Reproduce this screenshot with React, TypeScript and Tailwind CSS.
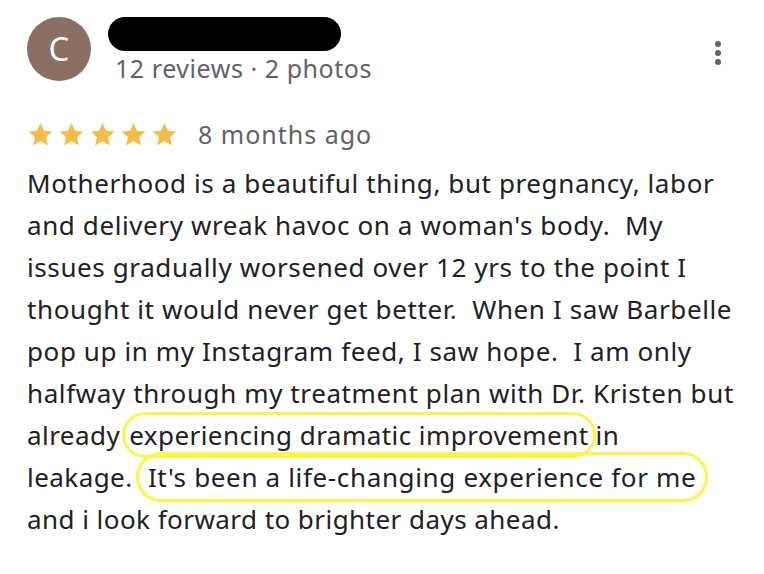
import React from "react";

const Star = () => (
  <svg viewBox="0 0 24 24" className="h-[27px] w-[27px]" fill="#f6bd46">
    <path d="M12 1.8l3.1 6.9 7.4.7-5.6 5 1.7 7.4L12 18l-6.6 3.8 1.7-7.4-5.6-5 7.4-.7z" />
  </svg>
);

const lines = [
  "Motherhood is a beautiful thing, but pregnancy, labor",
  "and delivery wreak havoc on a woman's body.  My",
  "issues gradually worsened over 12 yrs to the point I",
  "thought it would never get better.  When I saw Barbelle",
  "pop up in my Instagram feed, I saw hope.  I am only",
  "halfway through my treatment plan with Dr. Kristen but",
];

export default function App() {
  return (
    <div
      className="h-[574px] w-[764px] overflow-hidden bg-white pl-[27px] pt-[17px] text-[#202124]"
      style={{ fontFamily: "'Noto Sans', 'Open Sans', sans-serif" }}
    >
      {/* header */}
      <div className="flex">
        <div className="flex h-[64px] w-[64px] items-center justify-center rounded-full bg-[#8b6f64] text-[33px] text-white">
          C
        </div>
        <div className="ml-[17px] flex-1">
          <div className="h-[34px] w-[233px] rounded-[17px] bg-black" />
          <div className="ml-[7px] mt-[1px] text-[25px] leading-[32px] tracking-[0.55px] text-[#5f6368]">
            12 reviews · 2 photos
          </div>
        </div>
        <div className="mr-[43px] mt-[24px] flex flex-col gap-[3px]">
          <span className="h-[6px] w-[6px] rounded-full bg-[#5f6368]" />
          <span className="h-[6px] w-[6px] rounded-full bg-[#5f6368]" />
          <span className="h-[6px] w-[6px] rounded-full bg-[#5f6368]" />
        </div>
      </div>

      {/* rating */}
      <div className="mt-[35px] flex items-center">
        <div className="flex gap-[4px]">
          <Star />
          <Star />
          <Star />
          <Star />
          <Star />
        </div>
        <span className="ml-[20px] text-[25px] leading-[30px] tracking-[1px] text-[#5f6368]">
          8 months ago
        </span>
      </div>

      {/* review */}
      <div className="mt-[13px] whitespace-pre text-[26px] leading-[42px] tracking-[0.6px]">
        {lines.map((l) => (
          <div key={l}>{l}</div>
        ))}
        <div className="tracking-[0.45px]">
          already
          <span className="ml-[2px] rounded-full border-[3px] border-[#fcf64a] px-[4px] py-[2px]">
            experiencing dramatic improvement
          </span>
          in
        </div>
        <div className="tracking-[0.45px]">
          leakage.{" "}
          <span className="-ml-[4px] rounded-full border-[3px] border-[#fcf64a] px-[9px] py-[4px] tracking-[0.65px]">
            It's been a life-changing experience for me
          </span>
        </div>
        <div className="tracking-[0.45px]">and i look forward to brighter days ahead.</div>
      </div>
    </div>
  );
}
